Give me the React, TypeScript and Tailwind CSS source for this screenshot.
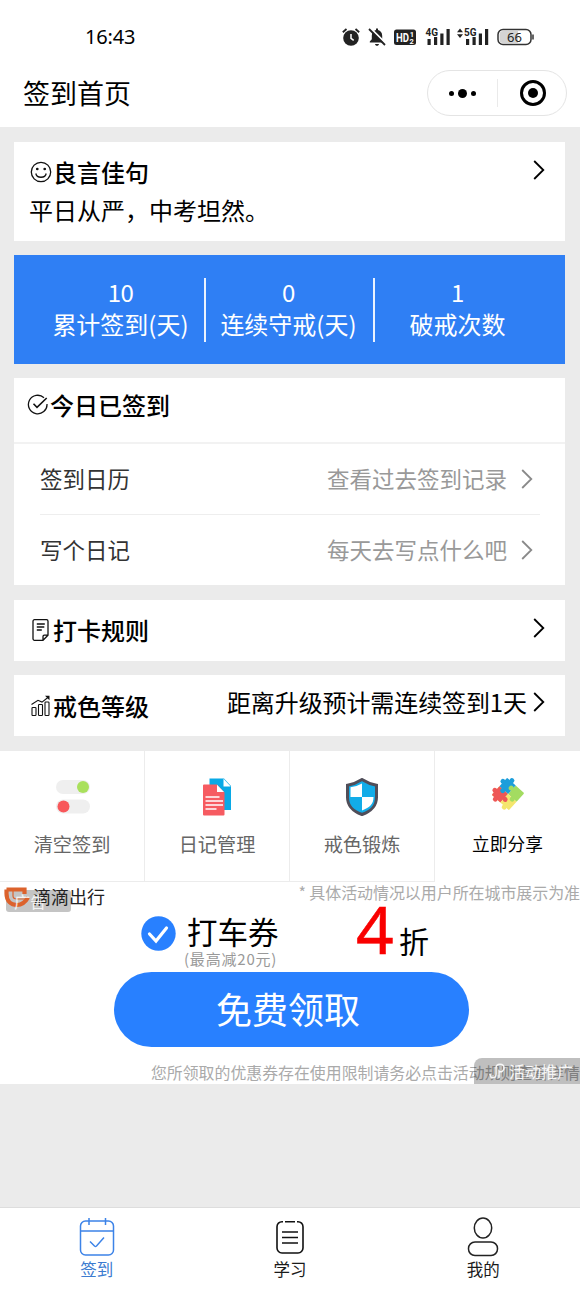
import type { ReactNode } from "react";

function Chevron({ className = "" }: { className?: string }) {
  return (
    <svg width="12" height="20" viewBox="0 0 12 20" fill="none" stroke="currentColor" strokeWidth="1.8" className={className}>
      <path d="M1.2 1 10.3 10 1.2 19" />
    </svg>
  );
}

function Signal({ label, arrows }: { label: string; arrows?: boolean }) {
  return (
    <svg width="34" height="20" viewBox="0 0 34 20" fill="#222">
      {arrows && <path d="M0 5.200 3 1.500 6 5.200zM0 7.200h6L3 11z" />}
      <g transform={arrows ? "translate(6.5 0)" : ""}>
        <rect x="2.500" y="12" width="3.200" height="6" />
        <rect x="9" y="10" width="3.200" height="8" />
        <rect x="15.300" y="6.500" width="3.200" height="11.500" />
        <rect x="21.500" y="2" width="3.200" height="16" />
      </g>
      <text x={arrows ? 7 : 0.5} y="9.2" fontSize="11.5" fontWeight="700" textLength="12.5" lengthAdjust="spacingAndGlyphs" fontFamily="Roboto, sans-serif">
        {label}
      </text>
    </svg>
  );
}

function StatusBar() {
  return (
    <div className="flex h-[60px] items-center justify-between pt-[14px] pr-[45px] pl-[85px]">
      <span className="text-[20px] leading-none font-normal tracking-[-0.2px] [font-family:'Noto_Sans','Noto_Sans_CJK_SC',sans-serif]">16:43</span>
      <div className="flex items-center">
        <svg width="18" height="20" viewBox="0 0 18 20" className="mr-[8px]">
          <circle cx="9" cy="11" r="7.800" fill="#222" />
          <path d="M.8 5.200 4.500 2M17.200 5.200 13.500 2" stroke="#222" strokeWidth="1.800" />
          <path d="M9 7v4.300l2.700 2" stroke="#fff" strokeWidth="1.500" fill="none" />
        </svg>
        <svg width="18" height="20" viewBox="0 0 18 20" className="mr-[8px]">
          <path d="M1.800 15.500v-1l2-2.200V8.800C3.800 5.600 5.500 3.500 8 3V1.500h2V3c2.500.5 4.200 2.600 4.200 5.800v3.500l2 2.200v1zM7 17h4c-.2 1-.9 1.800-2 1.800S7.200 18 7 17z" fill="#222" />
          <path d="M2.500 1.200 18 16.700" stroke="#fff" strokeWidth="2" />
          <path d="M1 2 17 18" stroke="#222" strokeWidth="1.800" />
        </svg>
        <svg width="22" height="18" viewBox="0 0 22 18" className="mr-[9px]">
          <rect y="1.500" width="22" height="15.500" rx="2.500" fill="#222" />
          <text x="2" y="13.600" fontSize="12" fontWeight="700" fill="#fff" textLength="13" lengthAdjust="spacingAndGlyphs" fontFamily="Roboto, sans-serif">HD</text>
          <text x="15.800" y="8.800" fontSize="7.500" fontWeight="700" fill="#fff" fontFamily="Roboto, sans-serif">1</text>
          <text x="15.500" y="15.500" fontSize="7.500" fontWeight="700" fill="#fff" fontFamily="Roboto, sans-serif">2</text>
        </svg>
        <Signal label="4G" />
        <div className="-ml-[2px]"><Signal label="5G" arrows /></div>
        <svg width="38" height="18" viewBox="0 0 38 18" className="ml-[6px]">
          <rect x="1" y="1.500" width="33" height="15" rx="5" fill="#fff" stroke="#333" strokeWidth="1.500" />
          <path d="M6 3h15v12H6a3.500 3.500 0 0 1-3.500-3.500v-5A3.500 3.500 0 0 1 6 3z" fill="#d4d4d4" />
          <path d="M36 6.500v5" stroke="#333" strokeWidth="1.500" />
          <text x="10" y="13.600" fontSize="13" fill="#222" fontFamily="Noto Sans, sans-serif">66</text>
        </svg>
      </div>
    </div>
  );
}

function NavBar() {
  return (
    <div className="flex h-[67px] items-start justify-between pr-[13px] pl-[23px]">
      <h1 className="mt-[13px] text-[27px] leading-[40px]">签到首页</h1>
      <div className="mt-[10px] flex h-[46px] w-[140px] items-center rounded-full border border-[#e4e4e4]">
        <div className="flex w-[69px] items-center justify-center gap-[4px]">
          <i className="size-[5px] rounded-full bg-black" />
          <i className="size-[9px] rounded-full bg-black" />
          <i className="size-[5px] rounded-full bg-black" />
        </div>
        <div className="h-[28px] w-px bg-[#eaeaea]" />
        <div className="flex flex-1 justify-center pl-[2px]">
          <div className="flex size-[26px] items-center justify-center rounded-full border-[3px] border-black">
            <i className="size-[10px] rounded-full bg-black" />
          </div>
        </div>
      </div>
    </div>
  );
}

function Stat({ value, label }: { value: string; label: string }) {
  return (
    <div className="flex w-[169px] flex-col items-center pb-[3px] text-[24px] leading-[32px] whitespace-nowrap">
      <span className="tracking-[-0.5px]">{value}</span>
      <span>{label}</span>
    </div>
  );
}

function Row({ label, hint }: { label: string; hint: string }) {
  return (
    <div className="flex h-[70px] items-center text-[22.5px] text-[#333]">
      <span className="flex-1">{label}</span>
      <span className="mr-[14px] text-[#999]">{hint}</span>
      <Chevron className="mr-[7px] text-[#8a8a8a]" />
    </div>
  );
}

function Tile({ icon, children, last }: { icon: ReactNode; children: ReactNode; last?: boolean }) {
  return (
    <div className={`flex h-[131px] w-[145px] flex-col items-center border-[#ececec] ${last ? "pt-[21px] text-[17.7px] text-black" : "border-r border-b pt-[24px] text-[19.2px] text-[#666]"}`}>
      <div className="flex h-[44px] items-center">{icon}</div>
      <span className={last ? "mt-[12px] leading-[30px]" : "mt-[10px] leading-[30px]"}>{children}</span>
    </div>
  );
}

const smile = (
  <svg width="22" height="22" viewBox="0 0 22 22" fill="none" stroke="#111" strokeWidth="1.3">
    <circle cx="11" cy="11" r="9.700" />
    <path d="M5.800 12.500c1 5 9.400 5 10.400 0" />
    <circle cx="7.300" cy="8" r=".7" fill="#111" />
    <circle cx="14.700" cy="8" r=".7" fill="#111" />
  </svg>
);

const checkRing = (
  <svg width="22" height="22" viewBox="0 0 22 22" fill="none" stroke="#111" strokeWidth="1.3">
    <path d="M17 3.700A9.300 9.300 0 1 0 20 10" />
    <path d="M6.500 9.800 10 13.300 19.700 4" strokeWidth="1.600" />
  </svg>
);

const note = (
  <svg width="18" height="24" viewBox="0 0 18 24" fill="none" stroke="#111" strokeWidth="1.3">
    <path d="M11 22.300H2.500A1.500 1.500 0 0 1 1 20.800V3.200a1.500 1.500 0 0 1 1.500-1.500h12A1.500 1.500 0 0 1 16 3.200v14zM11 22.300V18.500q0-1.300 1.300-1.300H16M4.800 6h8M4.800 9h7.500M4.800 12h5" />
  </svg>
);

const growth = (
  <svg width="20" height="22" viewBox="0 0 20 22" fill="none" stroke="#111" strokeWidth="1.1">
    <rect x="1" y="12.500" width="4" height="8" rx=".8" />
    <rect x="7.500" y="9.500" width="4" height="11" rx=".8" />
    <rect x="14" y="7" width="4" height="13.500" rx=".8" />
    <path d="M.5 9.500 7 5.300l4 1.800L17.500 2" />
    <path d="M14 .8h4.500v4.500z" fill="#111" stroke="none" />
  </svg>
);

const toggles = (
  <svg width="34" height="36" viewBox="0 0 34 36" className="ml-[1px]">
    <rect y="1" width="34" height="14" rx="7" fill="#efefef" />
    <circle cx="27" cy="8" r="6" fill="#a9e05c" />
    <rect y="20.500" width="34" height="14" rx="7" fill="#efefef" />
    <circle cx="7.500" cy="27.500" r="6" fill="#f8575a" />
  </svg>
);

const papers = (
  <svg width="30" height="38" viewBox="0 0 30 38">
    <path d="M7.500.5H22l7 7.500v24H7.500z" fill="#09a9e6" />
    <path d="M21.500.8v7.700h7.200z" fill="#fff" />
    <path d="M2 6.500h13l7.500 8v22a1 1 0 0 1-1 1H2a1 1 0 0 1-1-1v-29a1 1 0 0 1 1-1z" fill="#f65b61" />
    <path d="M15 6.800V14h7z" fill="#fff" />
    <path d="M3.500 19h14M3.500 23h17.500M3.500 27h17.500M3.500 31h11" stroke="#fff" strokeWidth="1.300" />
  </svg>
);

const shield = (
  <svg width="34" height="38" viewBox="0 0 34 38">
    <path d="M17 1.500 Q24 6 31.500 7.200v12c0 9-5 13.700-14.500 17.300C7.500 32.900 2.500 28.200 2.500 19.200v-12Q10 6 17 1.500z" fill="#12ace8" stroke="#504e59" strokeWidth="3" />
    <path d="M17 5.500V19H5.500V9.300Q12 8.500 17 5.500zM17 19h11.500c0 7-3.500 10.500-11.500 13.500z" fill="#fff" />
  </svg>
);

const puzzle = (
  <svg width="36" height="36" viewBox="0 0 36 36">
    <g transform="rotate(42 18 18)">
      <path d="M18 18h11.500v10.500a1 1 0 0 1-1 1H18z" fill="#f4e66d" transform="rotate(90 18 18)" />
      <path d="M18 6.500h10.500a1 1 0 0 1 1 1V18H18z" fill="#a3dc61" />
      <path d="M6.500 7.500a1 1 0 0 1 1-1H18V18H6.500z" fill="#1c9edb" />
      <path d="M6.500 18H18v11.500H7.500a1 1 0 0 1-1-1z" fill="#ee5757" />
      <path d="M18 18h11.500v10.500a1 1 0 0 1-1 1H18z" fill="#f4e66d" />
      <circle cx="12" cy="5.500" r="2.500" fill="#1c9edb" />
      <circle cx="5.800" cy="12" r="2.500" fill="#1c9edb" />
      <circle cx="5.800" cy="24" r="2.500" fill="#ee5757" />
      <circle cx="12" cy="30.300" r="2.500" fill="#ee5757" />
      <circle cx="24" cy="30.300" r="2.500" fill="#f4e66d" />
      <circle cx="16.500" cy="11.500" r="2.500" fill="#a3dc61" />
      <circle cx="11.800" cy="19" r="2.500" fill="#1c9edb" />
      <circle cx="19.500" cy="24" r="2.500" fill="#ee5757" />
      <circle cx="24.500" cy="19" r="2.500" fill="#a3dc61" />
    </g>
  </svg>
);

function PromoBanner() {
  return (
    <section className="relative isolate h-[202px] overflow-hidden bg-white">
      <div className="flex h-[26px] items-start justify-between whitespace-nowrap">
        <div className="flex items-center pl-[4px]">
          <svg width="26" height="24" viewBox="0 0 26 24" className="mt-[2px]">
            <path d="M2.500 4.500h18v4.500M2.500 4.500v4C2.500 16 7 20 13 20s9-4 11-7.500" fill="none" stroke="#dc622c" strokeWidth="4.200" />
            <path d="M9 6v5c0 2 1.500 3 4 3h8" fill="none" stroke="#dc622c" strokeWidth="1.200" />
          </svg>
          <span className="ml-[3px] text-[18px] leading-[28px] text-[#222]">滴滴出行</span>
        </div>
        <span className="text-[16px] leading-[20px] tracking-[-0.08px] text-[#aaa]">* 具体活动情况以用户所在城市展示为准</span>
      </div>
      <div className="flex h-[64px] pl-[141px]">
        <svg width="35" height="35" viewBox="0 0 35 35" className="mt-[8px]">
          <circle cx="17.500" cy="17.500" r="17.200" fill="#2880ff" />
          <path d="m8.500 18 6.500 7 10.500-13" fill="none" stroke="#fff" strokeWidth="3.200" strokeLinecap="round" />
        </svg>
        <div className="ml-[8px] flex w-[172px] flex-col whitespace-nowrap">
          <span className="h-[41px] pl-[3px] text-[30.5px] leading-[47px] text-black">打车券</span>
          <span className="text-[15px] leading-[20px] tracking-[0.8px] text-[#999]">(最高减20元)</span>
        </div>
        <span className="-mt-[13px] w-[43px] text-[66px] leading-[66px] text-[#f90000] [font-family:'Noto_Sans',sans-serif] [-webkit-text-stroke:0.5px_#f90000]">4</span>
        <span className="mt-[12px] text-[30px] leading-[40px] text-black">折</span>
      </div>
      <button className="ml-[114px] flex h-[75px] w-[355px] items-center justify-center rounded-full bg-[#2880ff] pr-[7px] pb-[3px] text-[36px] leading-none text-white">免费领取</button>
      <p className="mt-[14px] text-right text-[15.9px] leading-[24px] whitespace-nowrap text-[#aaa]">您所领取的优惠券存在使用限制请务必点击活动规则查看详情</p>
      <div className="absolute top-[8px] left-[6px] -z-10 h-[22px] w-[65px] rounded-[3px] bg-[#c4c4c4]" />
      <span className="absolute top-[10px] left-[14px] text-[16px] leading-[18px] text-white/80">广告</span>
      <div className="absolute right-0 bottom-0 flex h-[26px] w-[106px] items-center rounded-tl-[8px] bg-black/25 pl-[15px] text-[16px] whitespace-nowrap text-white/90">
        <svg width="17" height="18" viewBox="0 0 17 18" fill="none" stroke="currentColor" strokeWidth="1.500" className="mr-[3px]">
          <path d="M1 12c0 5 6 5 6 0V6c0-5 8-5 8 0 0 3-3 5-5 3v7" />
        </svg>
        活动推广
      </div>
    </section>
  );
}

function TabItem({ icon, label, active }: { icon: ReactNode; label: string; active?: boolean }) {
  return (
    <div className={`flex flex-1 flex-col items-center pt-[9px] text-[16.5px] ${active ? "text-[#3c7bd0]" : "text-[#1a1a1a]"}`}>
      <div className="flex h-[40px] items-center">{icon}</div>
      <span className="leading-[24px]">{label}</span>
    </div>
  );
}

export default function App() {
  return (
    <div className="flex h-[1289px] w-[580px] flex-col overflow-hidden bg-[#ebebeb] text-black [font-family:'Noto_Sans_CJK_SC',sans-serif]">
      <header className="h-[127px] bg-white">
        <StatusBar />
        <NavBar />
      </header>

      <main className="flex flex-1 flex-col">
        <div className="mt-[15px] mr-[15px] ml-[14px] flex flex-col">
          <section className="h-[99px] bg-white pt-[11px] pl-[16px]">
            <div className="flex h-[38px] items-center pr-[20px]">
              {smile}
              <h2 className="ml-[1px] flex-1 text-[24px] leading-[36px] font-medium">良言佳句</h2>
              <Chevron className="-mt-[4px]" />
            </div>
            <p className="-ml-[1px] text-[24px] leading-[38px]">平日从严，中考坦然。</p>
          </section>

          <section className="mt-[14px] flex h-[109px] items-center bg-[#2f7ff4] pl-[22px] text-white">
            <Stat value="10" label="累计签到(天)" />
            <div className="-ml-[1px] h-[64px] w-[2px] bg-white/90" />
            <div className="-ml-[2px]">
              <Stat value="0" label="连续守戒(天)" />
            </div>
            <div className="h-[64px] w-[2px] bg-white/90" />
            <div className="-ml-[2px]">
              <Stat value="1" label="破戒次数" />
            </div>
          </section>

          <section className="mt-[14px] h-[207px] bg-white">
            <div className="flex h-[66px] items-center border-b-2 border-[#f2f2f2] pb-[10px] pl-[13px]">
              {checkRing}
              <h2 className="ml-[1px] text-[24px] leading-[36px] font-medium">今日已签到</h2>
            </div>
            <div className="pr-[25px] pl-[26px]">
              <Row label="签到日历" hint="查看过去签到记录" />
              <div className="h-px bg-[#eee]" />
              <Row label="写个日记" hint="每天去写点什么吧" />
            </div>
          </section>

          <section className="mt-[15px] flex h-[61px] items-center bg-white pr-[20px] pb-[2px] pl-[18px]">
            {note}
            <h2 className="ml-[3px] flex-1 text-[24px] font-medium">打卡规则</h2>
            <Chevron className="-mt-[4px]" />
          </section>

          <section className="mt-[14px] flex h-[61px] items-center bg-white pr-[20px] pl-[17px]">
            {growth}
            <h2 className="ml-[2px] flex-1 text-[24px] font-medium">戒色等级</h2>
            <span className="-mt-[7px] mr-[6px] text-[24px] tracking-[-0.1px]">距离升级预计需连续签到1天</span>
            <Chevron className="-mt-[7px]" />
          </section>
        </div>

        <section className="mt-[15px] flex h-[131px] bg-white">
          <Tile icon={toggles}>清空签到</Tile>
          <Tile icon={papers}>日记管理</Tile>
          <Tile icon={shield}>戒色锻炼</Tile>
          <Tile icon={puzzle} last>立即分享</Tile>
        </section>
        <PromoBanner />
      </main>

      <nav className="flex h-[82px] border-t border-[#ddd] bg-white">
        <TabItem
          active
          label="签到"
          icon={
            <svg width="36" height="40" viewBox="0 0 36 40" fill="none" stroke="#3c83e8" strokeWidth="1.5">
              <rect x="1.500" y="4" width="33" height="34" rx="5" />
              <path d="M1.500 14h33M10 1v7M26.500 1v7" />
              <path d="M11 24.500 15.500 29q1 .8 2 0L25 20.500" />
            </svg>
          }
        />
        <TabItem
          label="学习"
          icon={
            <svg width="28" height="36" viewBox="0 0 28 36" fill="none" stroke="#111" strokeWidth="1.6">
              <path d="M7 2.700H6a5 5 0 0 0-5 5V29a5 5 0 0 0 5 5h16a5 5 0 0 0 5-5V7.700a5 5 0 0 0-5-5h-1M9 2.700h10M6 13h16M6 18.500h16M6 24h16" />
            </svg>
          }
        />
        <TabItem
          label="我的"
          icon={
            <svg width="32" height="40" viewBox="0 0 32 40" fill="none" stroke="#222" strokeWidth="1.5">
              <ellipse cx="16" cy="11" rx="8.700" ry="10" />
              <rect x="1.500" y="25" width="29" height="13.500" rx="6.500" />
            </svg>
          }
        />
      </nav>
    </div>
  );
}
